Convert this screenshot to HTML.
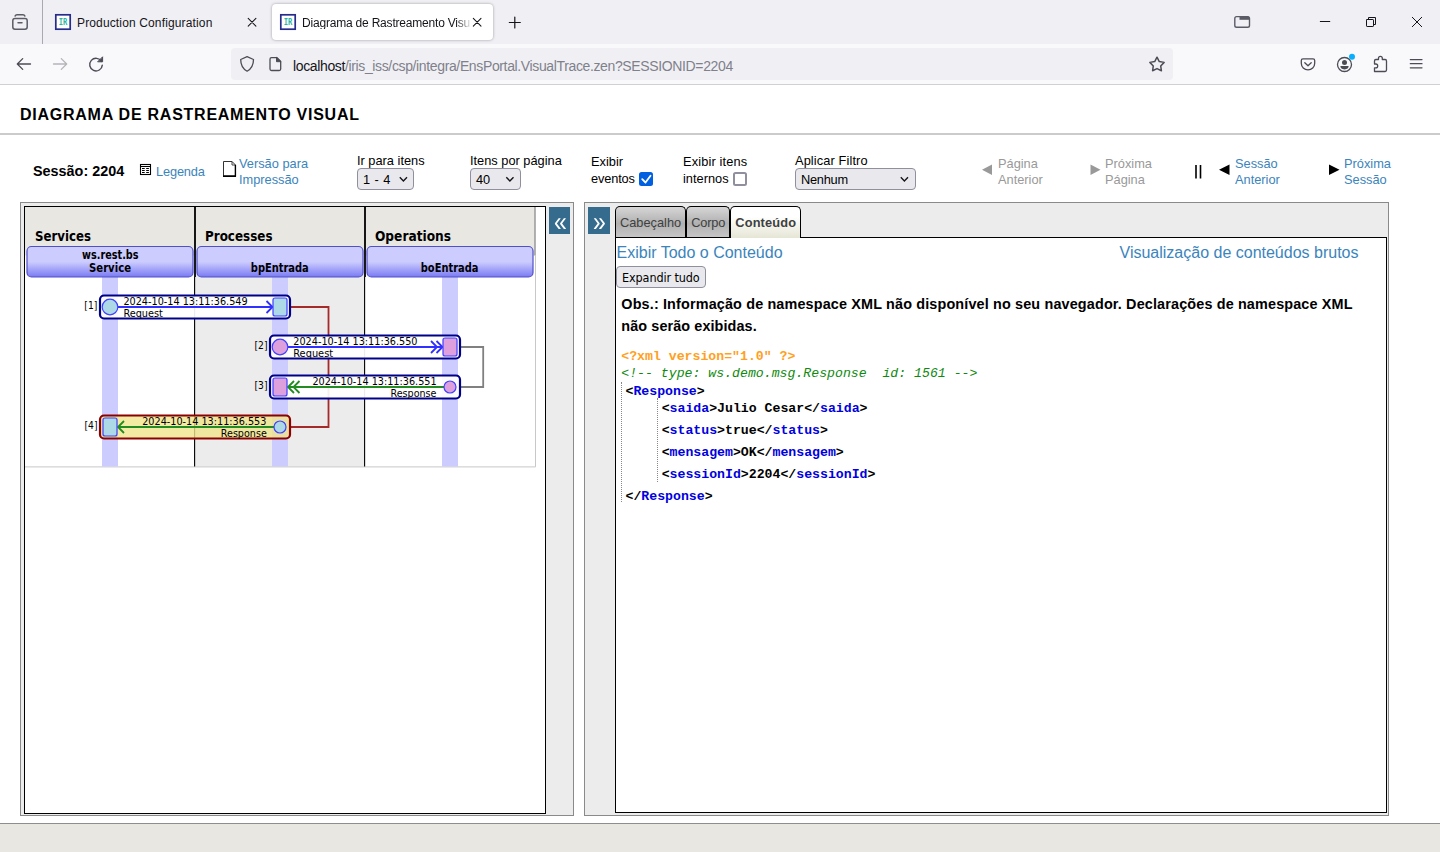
<!DOCTYPE html>
<html lang="pt-BR">
<head>
<meta charset="utf-8">
<title>Diagrama de Rastreamento Visual</title>
<style>
*{box-sizing:border-box;margin:0;padding:0}
html,body{width:1440px;height:852px;overflow:hidden;background:#fff}
body{position:relative;font-family:"Liberation Sans",Arial,sans-serif;color:#000}
.abs{position:absolute}
.t{position:absolute;white-space:nowrap;line-height:1;}
/* browser chrome */
#tabbar{position:absolute;left:0;top:0;width:1440px;height:44px;background:#f0f0f4}
#navbar{position:absolute;left:0;top:44px;width:1440px;height:40px;background:#f9f9fb}
#navline{position:absolute;left:0;top:84px;width:1440px;height:1px;background:#cfcfd4}
#tabsep{position:absolute;left:42px;top:0;width:1px;height:44px;background:#a9a9b2}
#acttab{position:absolute;left:272px;top:4px;width:221px;height:36px;background:#fff;border-radius:4px;box-shadow:0 0 3px rgba(0,0,0,.35)}
#urlbar{position:absolute;left:231px;top:48px;width:942px;height:32px;background:#f0f0f4;border-radius:4px}
.fav{position:absolute;width:16px;height:16px;border:2px solid #2a2f8f;background:#fff;}
.fav span{position:absolute;left:1.2px;top:1.2px;font:bold 10px/10px "Liberation Serif",serif;color:#2bb5a5;letter-spacing:-0.3px}
.tabtxt{font-size:12px;color:#15141a}
/* page */
.lnk{color:#3b84bc}
.gray{color:#999}
.sel{position:absolute;height:22px;top:168px;background:#e9e9ed;border:1px solid #8f8f9d;border-radius:4px}
.frame{position:absolute;background:#ececec;border:1px solid #8a8a8a}
.navbtn{position:absolute;width:22px;height:27px;top:207px;background:#356b8d}
.mono{font-family:"Liberation Mono",monospace;font-weight:bold;font-size:13.2px}
.xb{color:#0000e0}
.tab{top:206px;height:31px;border:1.5px solid #000;border-bottom:none;border-radius:5px 5px 0 0;background:linear-gradient(#d6d6d6,#b0b0b0 55%,#c6c6c6)}
.tab.act{background:linear-gradient(#fff 30%,#e6e6d6);height:32px}
</style>
</head>
<body>
<!-- ===== Browser chrome ===== -->
<div id="tabbar"></div>
<div id="navbar"></div>
<div id="navline"></div>
<div id="tabsep"></div>
<div id="acttab"></div>
<div id="urlbar"></div>

<!-- chrome icons -->
<svg class="abs" style="left:0;top:0" width="1440" height="85" viewBox="0 0 1440 85" fill="none" stroke="#5b5b66" stroke-width="1.3" stroke-linecap="round" stroke-linejoin="round">
 <!-- tab list icon -->
 <path d="M15.100 16q0.500-1.300 1.900-1.300h6q1.400 0 1.900 1.300" stroke-width="1.500"/>
 <rect x="12.800" y="18.600" width="14.400" height="10.600" rx="2.200" stroke-width="1.500"/>
 <path d="M18 22.700h4" stroke-width="1.500"/>
 <!-- close tab 1 -->
 <path d="M248.200 18.400l7.700 7.700M255.900 18.400l-7.700 7.700" stroke="#15141a" stroke-width="1.050"/>
 <!-- close tab 2 -->
 <path d="M473.300 18.400l7.700 7.700M481 18.400l-7.700 7.700" stroke="#15141a" stroke-width="1.050"/>
 <!-- plus -->
 <path d="M509.300 22.500h11M514.800 17v11" stroke="#15141a" stroke-width="1.200"/>
 <!-- window icon -->
 <rect x="1234.800" y="16.600" width="14.700" height="10.700" rx="1.800" stroke="#5b5b66" stroke-width="1.400"/>
 <path d="M1239.500 16.600h9.500v3.200h-9.500z" fill="#5b5b66" stroke="none"/>
 <!-- minimize -->
 <path d="M1320.300 21.500h9.500" stroke="#15141a" stroke-width="1"/>
 <!-- restore -->
 <rect x="1366.500" y="19.500" width="7" height="7" rx="0.600" stroke="#15141a" stroke-width="1"/>
 <path d="M1368.500 19.300v-1.800h7v7h-1.800" stroke="#15141a" stroke-width="1" stroke-linejoin="miter"/>
 <!-- close -->
 <path d="M1412.300 17.300l9.400 9.400M1421.700 17.300l-9.400 9.400" stroke="#15141a" stroke-width="1"/>
 <!-- back -->
 <path d="M30.500 64h-13M22.700 58.600l-5.400 5.400l5.400 5.400" stroke="#4c4c57" stroke-width="1.300"/>
 <!-- forward -->
 <path d="M53.500 64h13M61.300 58.600l5.400 5.400l-5.400 5.400" stroke="#b4b4ba" stroke-width="1.300"/>
 <!-- reload -->
 <path d="M101.5 61.5a6.3 6.3 0 1 0 0.8 3.6" stroke="#4c4c57" stroke-width="1.4"/>
 <path d="M102.6 57.2v4.6h-4.6z" fill="#4c4c57" stroke="#4c4c57" stroke-width="1"/>
 <!-- shield -->
 <path d="M247.100 56.700l6.400 2.800c0 5.700-2 9.300-6.400 11.700c-4.400-2.400-6.400-6-6.400-11.700z" stroke="#4c4c57" stroke-width="1.3"/>
 <!-- page -->
 <path d="M271.500 57.700h5.500l3.700 3.700v7.600q0 1.500-1.500 1.500h-7.700q-1.500 0-1.500-1.500v-9.800q0-1.500 1.500-1.500z" stroke="#4c4c57" stroke-width="1.3"/>
 <path d="M276.500 57.700v4h4.200z" fill="#4c4c57" stroke="#4c4c57" stroke-width="1"/>
 <!-- star -->
 <path d="M1157.00 57.20L1159.29 61.54L1164.13 62.38L1160.71 65.91L1161.41 70.77L1157.00 68.60L1152.59 70.77L1153.29 65.91L1149.87 62.38L1154.71 61.54z" stroke="#4c4c57" stroke-width="1.500"/>
 <!-- pocket -->
 <path d="M1303 58.800h10q1.700 0 1.700 1.700v2.700a6.700 6.700 0 0 1-13.400 0v-2.700q0-1.700 1.700-1.700z" stroke="#4c4c57" stroke-width="1.3"/>
 <path d="M1304.800 62.800l3.200 3l3.200-3" stroke="#4c4c57" stroke-width="1.3"/>
 <!-- account -->
 <circle cx="1344.500" cy="64.500" r="7" stroke="#4c4c57" stroke-width="1.3"/>
 <circle cx="1344.500" cy="62.500" r="2.500" fill="#4c4c57" stroke="none"/>
 <path d="M1340.400 66.100h8.200a4.100 3.300 0 0 1-8.200 0z" fill="#4c4c57" stroke="none"/>
 <circle cx="1352" cy="56.800" r="3" fill="#0aaeff" stroke="none"/>
 <!-- puzzle -->
 <path d="M1378.500 59.500v-1.200a1.900 1.900 0 0 1 3.800 0v1.200h2.800q1.400 0 1.400 1.400v9.200q0 1.400-1.400 1.400h-10.600v-3.700h1.300a1.900 1.900 0 0 0 0-3.800h-1.300v-3.100q0-1.400 1.400-1.400z" stroke="#4c4c57" stroke-width="1.3"/>
 <!-- hamburger -->
 <path d="M1410.300 59.600h11.700M1410.300 63.700h11.700M1410.300 67.800h11.700" stroke="#4c4c57" stroke-width="1.250"/>
</svg>

<svg class="abs" style="left:54px;top:13px" width="18" height="18" viewBox="0 0 18 18"><rect x="1.800" y="1.800" width="14.400" height="14.400" fill="#fff" stroke="#262b8c" stroke-width="1.700"/><text x="9" y="12" text-anchor="middle" font-family="'DejaVu Sans Mono',monospace" font-weight="bold" font-size="8.500px" fill="#2bb5a5" textLength="8.600" lengthAdjust="spacingAndGlyphs">IR</text></svg>
<svg class="abs" style="left:279px;top:13px" width="18" height="18" viewBox="0 0 18 18"><rect x="1.800" y="1.800" width="14.400" height="14.400" fill="#fff" stroke="#262b8c" stroke-width="1.700"/><text x="9" y="12" text-anchor="middle" font-family="'DejaVu Sans Mono',monospace" font-weight="bold" font-size="8.500px" fill="#2bb5a5" textLength="8.600" lengthAdjust="spacingAndGlyphs">IR</text></svg>
<div class="t tabtxt" id="tt1" style="left:77px;top:17px;letter-spacing:0.14px">Production Configuration</div>
<div class="t tabtxt" id="tt2" style="left:302px;top:17px;width:168px;overflow:hidden;-webkit-mask-image:linear-gradient(to right,#000 154px,transparent 170px);mask-image:linear-gradient(to right,#000 154px,transparent 170px);letter-spacing:-0.2px">Diagrama de Rastreamento Visual</div>
<div class="t" id="url" style="left:293px;top:58.50px;font-size:14px;color:#80808b;letter-spacing:-0.365px"><span style="color:#15141a">localhost</span>/iris_iss/csp/integra/EnsPortal.VisualTrace.zen?SESSIONID=2204</div>

<!-- ===== Page ===== -->
<div class="t" id="title" style="left:20px;top:107.00px;font-size:16px;font-weight:bold;letter-spacing:0.75px">DIAGRAMA DE RASTREAMENTO VISUAL</div>
<div class="abs" style="left:0;top:133px;width:1440px;height:2px;background:#cbcbcb"></div>

<!-- toolbar -->
<div class="t" id="sess" style="left:33px;top:163.81px;font-size:14.4px;font-weight:bold">Sessão: 2204</div>
<svg class="abs" style="left:139px;top:163px" width="14" height="14" viewBox="139 163 14 14"><rect x="140.500" y="164.500" width="10" height="10" fill="#fff" stroke="#000" stroke-width="1.100"/><path d="M141 166.500h9" stroke="#000" stroke-width="1"/><path d="M142 168.500h2.700M146.200 168.500h2.700M142 170.500h2.700M146.200 170.500h2.700M142 172.500h2.700M146.200 172.500h2.700" stroke="#000" stroke-width="1.100"/></svg>
<div class="t lnk" id="leg" style="left:156px;top:166.06px;font-size:12.8px;letter-spacing:-0.15px">Legenda</div>
<svg class="abs" style="left:221px;top:159px" width="17" height="20" viewBox="221 159 17 20"><path d="M223.500 161.500h8.500l3.500 3.500v11h-12z" fill="#fff" stroke="#333" stroke-width="1"/><path d="M232 161.500v3.500h3.500" fill="none" stroke="#333" stroke-width="0.900"/><path d="M223 176.200h13" stroke="#000" stroke-width="1.600"/><path d="M235.400 165v11.500" stroke="#000" stroke-width="1.400"/></svg>
<div class="t lnk" id="ver1" style="left:239px;top:157.56px;font-size:12.8px">Versão para</div>
<div class="t lnk" id="ver2" style="left:239px;top:173.66px;font-size:12.8px">Impressão</div>

<div class="t" id="l1" style="left:357px;top:154.66px;font-size:12.8px">Ir para itens</div>
<div class="sel" style="left:357px;width:57px"></div>
<div class="t" id="s1" style="left:363px;top:173.86px;font-size:12.8px;letter-spacing:0.45px">1 - 4</div>
<div class="t" id="l2" style="left:470px;top:154.66px;font-size:12.8px">Itens por página</div>
<div class="sel" style="left:470px;width:51px"></div>
<div class="t" id="s2" style="left:476px;top:173.86px;font-size:12.8px">40</div>
<div class="t" id="l3a" style="left:591px;top:155.66px;font-size:12.8px">Exibir</div>
<div class="t" id="l3b" style="left:591px;top:173.46px;font-size:12.8px;letter-spacing:-0.15px">eventos</div>
<div class="abs" style="left:639px;top:172px;width:14px;height:14px;background:#0060df;border-radius:2.5px"></div>
<div class="t" id="l4a" style="left:683px;top:155.66px;font-size:12.8px;letter-spacing:0.15px">Exibir itens</div>
<div class="t" id="l4b" style="left:683px;top:173.46px;font-size:12.8px">internos</div>
<div class="abs" style="left:733px;top:172px;width:14px;height:14px;background:#fff;border:2px solid #8f8f9d;border-radius:2.5px"></div>
<div class="t" id="l5" style="left:795px;top:154.66px;font-size:12.8px;letter-spacing:0.11px">Aplicar Filtro</div>
<div class="sel" style="left:795px;width:121px"></div>
<div class="t" id="s3" style="left:801px;top:173.86px;font-size:12.8px;letter-spacing:-0.25px">Nenhum</div>
<svg class="abs" style="left:0;top:140px" width="1440" height="60" viewBox="0 140 1440 60">
 <path d="M642.200 179.200l3.300 3.300l5-6.700" fill="none" stroke="#fff" stroke-width="1.800" stroke-linecap="round" stroke-linejoin="round"/>
 <path d="M399.800 177.300l3.600 3.600l3.600-3.600M506.300 177.300l3.600 3.600l3.600-3.600M900.800 177.300l3.600 3.600l3.600-3.600" fill="none" stroke="#15141a" stroke-width="1.400"/>
 <path d="M992 164.500v10.500l-10-5.250z" fill="#999"/>
 <path d="M1090.500 164.500v10.500l10-5.250z" fill="#999"/>
 <path d="M1196 165v13.500M1200.500 165v13.500" stroke="#000" stroke-width="1.600"/>
 <path d="M1229.500 164.500v10.500l-10.500-5.250z" fill="#000"/>
 <path d="M1329 164.500v10.500l10.500-5.250z" fill="#000"/>
</svg>
<div class="t gray" id="pa1" style="left:998px;top:157.76px;font-size:12.8px">Página</div>
<div class="t gray" id="pa2" style="left:998px;top:173.56px;font-size:12.8px">Anterior</div>
<div class="t gray" id="pp1" style="left:1105px;top:157.76px;font-size:12.8px">Próxima</div>
<div class="t gray" id="pp2" style="left:1105px;top:173.56px;font-size:12.8px">Página</div>
<div class="t lnk" id="sa1" style="left:1235px;top:157.76px;font-size:12.8px">Sessão</div>
<div class="t lnk" id="sa2" style="left:1235px;top:173.56px;font-size:12.8px">Anterior</div>
<div class="t lnk" id="ps1" style="left:1344px;top:157.76px;font-size:12.8px">Próxima</div>
<div class="t lnk" id="ps2" style="left:1344px;top:173.56px;font-size:12.8px">Sessão</div>

<!-- left panel -->
<div class="frame" style="left:20px;top:202px;width:554px;height:614px"></div>
<div class="abs" style="left:24px;top:206px;width:522px;height:608px;background:#fff;border:1px solid #000"></div>
<div class="navbtn" style="left:549px;width:21px"></div>
<div class="t" id="lb" style="left:553.5px;top:208.5px;font-size:27px;color:#fff;transform:scaleX(.85);transform-origin:0 0">«</div>
<!--SVGSTART-->
<svg class="abs" style="left:25px;top:207px" width="521" height="607" viewBox="25 207 521 607" font-family="'DejaVu Sans Condensed','DejaVu Sans',sans-serif">
 <defs>
  <linearGradient id="hdrg" x1="0" y1="0" x2="0" y2="1">
   <stop offset="0" stop-color="#ccccff"/><stop offset="0.5" stop-color="#ccccff"/><stop offset="1" stop-color="#7a7af4"/>
  </linearGradient>
 </defs>
 <!-- column backgrounds -->
 <rect x="25" y="207" width="510" height="48.500" fill="#e8e7e2"/>
 <rect x="195" y="255.500" width="170" height="211" fill="#ececec"/>
 <path d="M25 466.900h510.500v-211.400" fill="none" stroke="#c8c8c8" stroke-width="1"/>
 <path d="M535 207v48.500" stroke="#999" stroke-width="1.500"/>
 <!-- dividers -->
 <path d="M195 207v70M365 207v70" stroke="#000" stroke-width="1.800"/>
 <path d="M194.600 277v189.500M364.600 277v189.500" stroke="#000" stroke-width="1.100"/>
 <!-- lifelines -->
 <rect x="102" y="277" width="16" height="189.500" fill="#ccccff"/>
 <rect x="272" y="277" width="16" height="189.500" fill="#ccccff"/>
 <rect x="442" y="277" width="16" height="189.500" fill="#ccccff"/>
 <!-- headers -->
 <g font-weight="bold" font-size="13.500px" fill="#000">
  <text x="35" y="240.600" textLength="56" lengthAdjust="spacingAndGlyphs">Services</text>
  <text x="205" y="240.600" textLength="67.500" lengthAdjust="spacingAndGlyphs">Processes</text>
  <text x="375" y="240.600" textLength="76" lengthAdjust="spacingAndGlyphs">Operations</text>
 </g>
 <g stroke="#5050c8" stroke-width="1.200" fill="url(#hdrg)">
  <rect x="27" y="246.500" width="166" height="30.500" rx="4.500"/>
  <rect x="197" y="246.500" width="166" height="30.500" rx="4.500"/>
  <rect x="367" y="246.500" width="166" height="30.500" rx="4.500"/>
 </g>
 <g font-weight="bold" font-size="12px" fill="#000">
  <text x="82" y="258.600" textLength="56.500" lengthAdjust="spacingAndGlyphs">ws.rest.bs</text>
  <text x="89" y="271.800" textLength="42" lengthAdjust="spacingAndGlyphs">Service</text>
  <text x="250.800" y="271.800" textLength="58" lengthAdjust="spacingAndGlyphs">bpEntrada</text>
  <text x="420.800" y="271.800" textLength="57.600" lengthAdjust="spacingAndGlyphs">boEntrada</text>
 </g>
 <!-- connectors -->
 <path d="M291 307h37.500v120h-37.500" fill="none" stroke="#a52a2a" stroke-width="1.800"/>
 <path d="M461 347h22.200v40h-22.200" fill="none" stroke="#808080" stroke-width="1.800"/>
 <!-- message boxes -->
 <g fill="#fff" fill-opacity="0.920" stroke="#00008b" stroke-width="2.200">
  <rect x="100" y="295.500" width="190" height="23" rx="4"/>
  <rect x="270" y="335.500" width="190" height="23" rx="4"/>
  <rect x="270" y="375.500" width="190" height="23" rx="4"/>
 </g>
 <rect x="100" y="415.500" width="190" height="23" rx="4" fill="#f0e68c" fill-opacity="0.800" stroke="#8b0000" stroke-width="2.200"/>
 <!-- arrows -->
 <g fill="none" stroke="#3030ff" stroke-width="1.800">
  <path d="M118 307h154.500M266.500 301l6 6l-6 6"/>
  <path d="M288 347h154.500M431 341l6 6l-6 6M436.500 341l6 6l-6 6"/>
 </g>
 <g fill="none" stroke="#228b22" stroke-width="1.800">
  <path d="M444 387h-155.500M299.500 381l-6 6l6 6M294 381l-6 6l6 6"/>
  <path d="M274 427h-155.500M124 421l-6 6l6 6"/>
 </g>
 <!-- endpoints -->
 <g stroke="#4040ff" stroke-width="1.200">
  <circle cx="110" cy="307" r="7.800" fill="#add8e6"/>
  <rect x="273" y="298" width="14" height="18" rx="2" fill="#add8e6"/>
  <circle cx="280" cy="347" r="7.800" fill="#dda0dd"/>
  <rect x="443" y="338" width="14" height="18" rx="2" fill="#dda0dd"/>
  <rect x="273" y="378" width="14" height="18" rx="2" fill="#dda0dd"/>
  <circle cx="450" cy="387" r="6" fill="#dda0dd"/>
  <rect x="103" y="418" width="14" height="18" rx="2" fill="#add8e6"/>
  <circle cx="280" cy="427" r="6" fill="#add8e6"/>
 </g>
 <!-- labels -->
 <g font-size="11.200px" fill="#000">
  <text x="84.300" y="309" textLength="13" lengthAdjust="spacingAndGlyphs">[1]</text>
  <text x="254.500" y="349.200" textLength="13" lengthAdjust="spacingAndGlyphs">[2]</text>
  <text x="254.500" y="389.200" textLength="13" lengthAdjust="spacingAndGlyphs">[3]</text>
  <text x="84.500" y="429" textLength="13" lengthAdjust="spacingAndGlyphs">[4]</text>
  <text x="123.400" y="304.500" textLength="124.200" lengthAdjust="spacingAndGlyphs">2024-10-14 13:11:36.549</text>
  <text x="123.400" y="316.500" textLength="39.500" lengthAdjust="spacingAndGlyphs">Request</text>
  <text x="293.300" y="344.500" textLength="124.200" lengthAdjust="spacingAndGlyphs">2024-10-14 13:11:36.550</text>
  <text x="293.300" y="356.900" textLength="39.800" lengthAdjust="spacingAndGlyphs">Request</text>
  <text x="312.400" y="384.500" textLength="124.200" lengthAdjust="spacingAndGlyphs">2024-10-14 13:11:36.551</text>
  <text x="390.500" y="397.100" textLength="46" lengthAdjust="spacingAndGlyphs">Response</text>
  <text x="142.200" y="424.500" textLength="124.200" lengthAdjust="spacingAndGlyphs">2024-10-14 13:11:36.553</text>
  <text x="220.800" y="437.100" textLength="46" lengthAdjust="spacingAndGlyphs">Response</text>
 </g>
</svg>
<!--SVGEND-->

<!-- right panel -->
<div class="frame" style="left:584px;top:202px;width:805px;height:614px"></div>
<div class="navbtn" style="left:588px"></div>
<div class="t" id="rb" style="left:592.5px;top:208.5px;font-size:27px;color:#fff;transform:scaleX(.85);transform-origin:0 0">»</div>
<div class="abs" style="left:615px;top:237px;width:772px;height:576px;background:#fff;border:1px solid #000"></div>
<!--RSTART-->
<!-- tabs -->
<div class="abs tab" style="left:615px;width:71px"></div>
<div class="abs tab" style="left:686px;width:44px"></div>
<div class="abs tab act" style="left:730px;width:71px"></div>
<div class="t" id="tb1" style="left:620px;top:217.06px;font-size:12.8px;color:#404040">Cabeçalho</div>
<div class="t" id="tb2" style="left:691.3px;top:217.06px;font-size:12.8px;color:#404040;letter-spacing:-0.2px">Corpo</div>
<div class="t" id="tb3" style="left:735.3px;top:217.06px;font-size:12.8px;color:#404040;font-weight:bold;letter-spacing:0.15px">Conteúdo</div>
<div class="t lnk" id="ex1" style="left:616.5px;top:245.40px;font-size:16px">Exibir Todo o Conteúdo</div>
<div class="t lnk" id="ex2" style="left:1119.5px;top:245.40px;font-size:16px">Visualização de conteúdos brutos</div>
<div class="abs" style="left:616px;top:266px;width:90px;height:22px;background:#e9e9ed;border:1px solid #8f8f9d;border-radius:4px"></div>
<div class="t" id="btn" style="left:622px;top:271.83px;font-size:12.5px;font-family:'DejaVu Sans Condensed','DejaVu Sans',sans-serif;letter-spacing:-0.1px">Expandir tudo</div>
<div class="t" id="ob1" style="left:621.3px;top:297.41px;font-size:14.4px;font-weight:bold;letter-spacing:0.15px">Obs.: Informação de namespace XML não disponível no seu navegador. Declarações de namespace XML</div>
<div class="t" id="ob2" style="left:621.3px;top:318.51px;font-size:14.4px;font-weight:bold;letter-spacing:0.1px">não serão exibidas.</div>
<!-- xml -->
<div class="abs" style="left:621px;top:382px;width:0;height:120px;border-left:1px dotted #888"></div>
<div class="abs" style="left:657px;top:398px;width:0;height:84px;border-left:1px dotted #888"></div>
<div class="t mono" id="x1" style="left:621.3px;top:350.08px;color:#ffa01e">&lt;?xml version="1.0" ?&gt;</div>
<div class="t mono" id="x2" style="left:621.3px;top:366.58px;color:#0e8a0e;font-style:italic;font-weight:normal">&lt;!-- type: ws.demo.msg.Response&nbsp; id: 1561 --&gt;</div>
<div class="t mono" id="x3" style="left:625.5px;top:384.78px">&lt;<span class="xb">Response</span>&gt;</div>
<div class="t mono" id="x4" style="left:661.7px;top:401.68px">&lt;<span class="xb">saida</span>&gt;Julio Cesar&lt;/<span class="xb">saida</span>&gt;</div>
<div class="t mono" id="x5" style="left:661.7px;top:423.88px">&lt;<span class="xb">status</span>&gt;true&lt;/<span class="xb">status</span>&gt;</div>
<div class="t mono" id="x6" style="left:661.7px;top:445.58px">&lt;<span class="xb">mensagem</span>&gt;OK&lt;/<span class="xb">mensagem</span>&gt;</div>
<div class="t mono" id="x7" style="left:661.7px;top:467.88px">&lt;<span class="xb">sessionId</span>&gt;2204&lt;/<span class="xb">sessionId</span>&gt;</div>
<div class="t mono" id="x8" style="left:625.5px;top:490.08px">&lt;/<span class="xb">Response</span>&gt;</div>
<!--REND-->

<!-- bottom bar -->
<div class="abs" style="left:0;top:823px;width:1440px;height:29px;background:#e8e7e2;border-top:1px solid #8e8e8e"></div>
</body>
</html>
